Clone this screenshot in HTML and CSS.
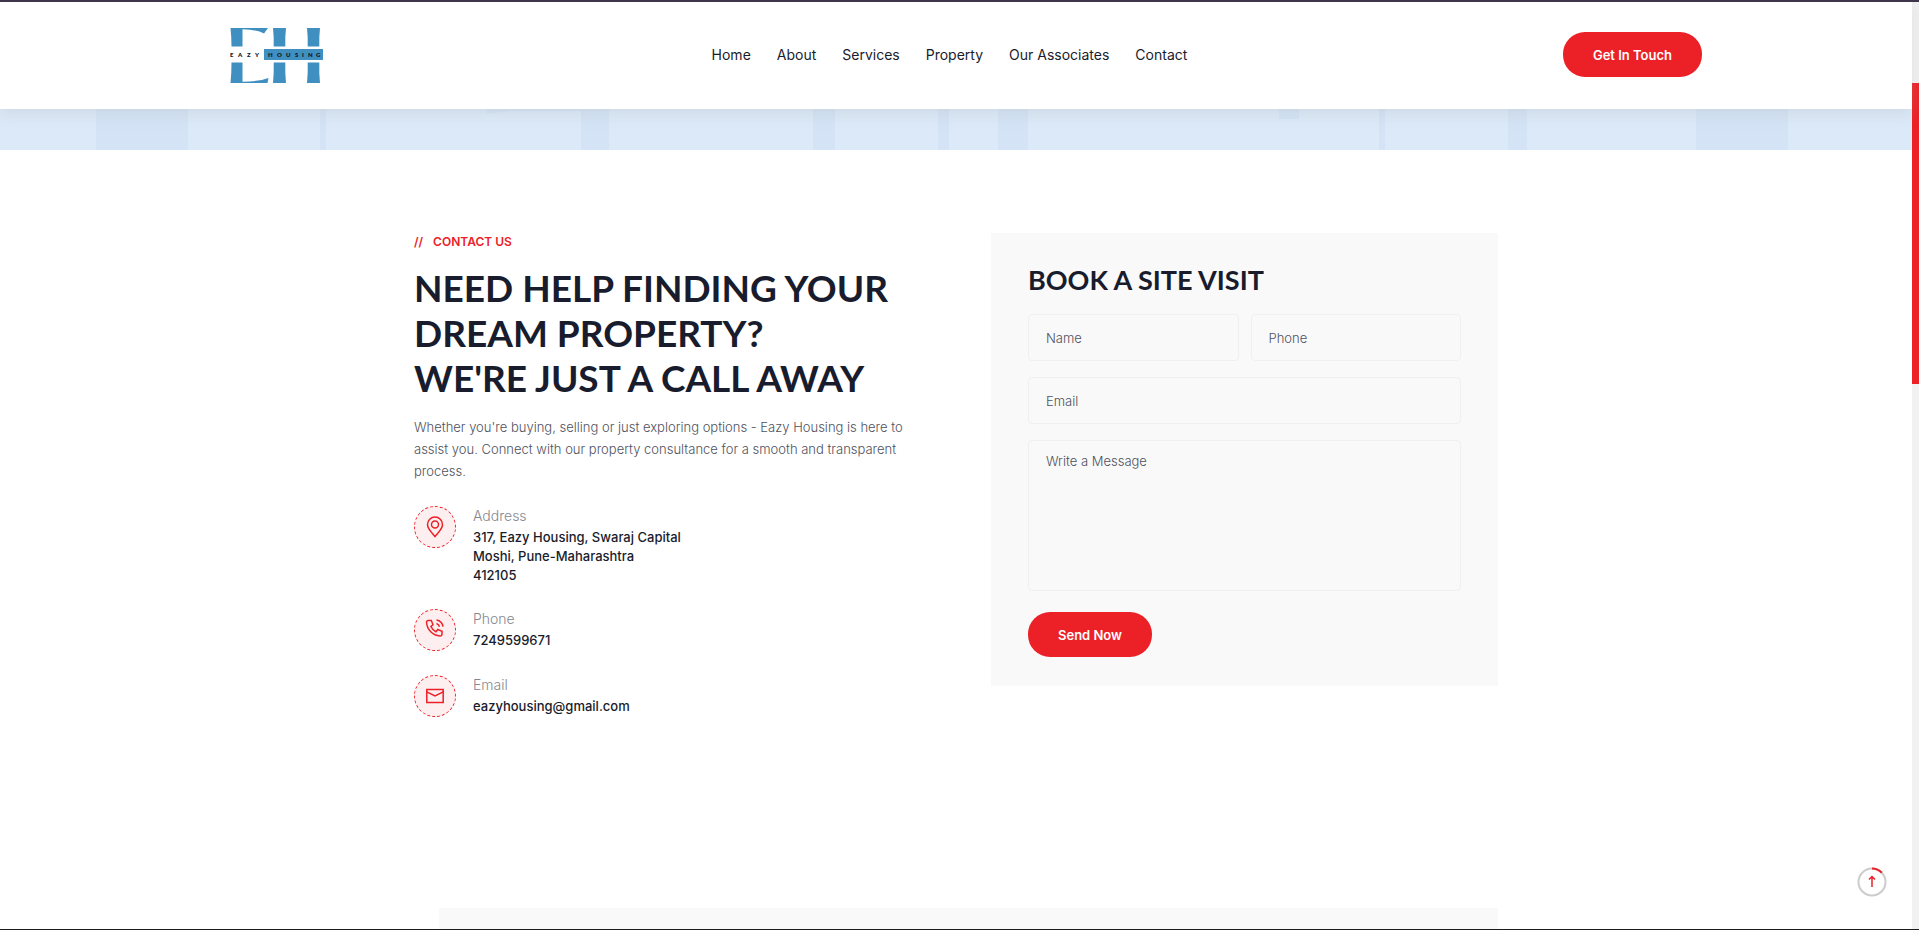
FILE: index.html
```html
<!DOCTYPE html>
<html lang="en">
<head>
    <meta charset="UTF-8">
    <meta name="viewport" content="width=device-width, initial-scale=1.0">
    <title>Eazy Housing - Contact</title>
    <link rel="stylesheet" href="styles.css">
</head>
<body>

    <div class="page">
        <!-- Header -->
        <header class="header">
            <div class="header-inner">
                <a class="logo" href="#" aria-label="Eazy Housing">
                    <svg width="94" height="58" viewBox="0 -1 94 58">
                        <g fill="#3f8fc0">
                            <path d="M0.500 1H38L34 6.500Q27 2.500 12.500 2.300V19.500H1.500Q1.500 10 0.500 1Z"/>
                            <path d="M0.500 56H37.500L38.500 51Q28 54.700 12.500 54.700V35.500H1.500Q1.500 46 0.500 56Z"/>
                            <path d="M43 1H56Q55 10 55.300 19.500H43.700Q44 10 43 1Z"/>
                            <path d="M43 56H56Q55 46 55.300 35.500H43.700Q44 46 43 56Z"/>
                            <path d="M77 1H90Q89 10 89.300 19.500H77.700Q78 10 77 1Z"/>
                            <path d="M77 56H90Q89 46 89.300 35.500H77.700Q78 46 77 56Z"/>
                            <rect x="34" y="22" width="59" height="11"/>
                        </g>
                        <g class="logo-text">
                            <text x="0 8 17 25" y="29.500">EAZY</text>
                            <text x="38 47 56 65 72 78 86" y="29.500">HOUSING</text>
                        </g>
                    </svg>
                </a>
                <nav class="nav">
                    <a href="#">Home</a>
                    <a href="#">About</a>
                    <a href="#">Services</a>
                    <a href="#">Property</a>
                    <a href="#">Our Associates</a>
                    <a href="#">Contact</a>
                </nav>
                <button class="button" type="button">Get In Touch</button>
            </div>
        </header>

        <!-- Bottom edge of the skyline banner -->
        <div class="banner">
            <svg class="skyline" viewBox="0 0 1912 41" preserveAspectRatio="none" aria-hidden="true">
                <g fill="#d4e3f6">
                    <rect x="96" width="92" height="41"/>
                    <rect x="320" width="6" height="41"/>
                    <rect x="581" width="28" height="41"/>
                    <path d="M487 0H581V2H510L487 5Z"/>
                    <rect x="813" width="22" height="41"/>
                    <rect x="938" width="11" height="41"/>
                    <rect x="998" width="30" height="41"/>
                    <rect x="1279" width="20" height="10"/>
                    <rect x="1379" width="6" height="41"/>
                    <rect x="1508" width="19" height="41"/>
                    <rect x="1696" width="92" height="41"/>
                </g>
            </svg>
        </div>

        <!-- Contact -->
        <main class="contact">
            <section class="contact-info">
                <p class="eyebrow"><span>//</span> Contact us</p>
                <h2>Need help finding your dream property?<br>We're just a call away</h2>
                <p class="intro">Whether you're buying, selling or just exploring options - Eazy Housing is here to assist you. Connect with our property consultance for a smooth and transparent process.</p>

                <ul class="contact-list">
                    <li>
                        <span class="contact-icon">
                            <svg width="20" height="22" viewBox="0 0 20 22">
                                <path d="M10 20.500C8 17.500 2.500 13.500 2.500 8.500A7.500 7.500 0 0 1 17.500 8.500C17.500 13.500 12 17.500 10 20.500Z"/>
                                <circle cx="10" cy="8.500" r="3.500"/>
                            </svg>
                        </span>
                        <div>
                            <span class="label">Address</span>
                            <address>317, Eazy Housing, Swaraj Capital<br>Moshi, Pune-Maharashtra<br>412105</address>
                        </div>
                    </li>
                    <li>
                        <span class="contact-icon">
                            <svg width="20" height="22" viewBox="0 2 20 22">
                                <path d="M3.200 3.500H6.300L8 7.700L5.900 9.500C7 12 8.500 13.500 11 14.700L12.800 12.500L17 14.200V17.300A1.700 1.700 0 0 1 15.200 18.900C7.800 18.500 2 12.700 1.500 5.200A1.700 1.700 0 0 1 3.200 3.500Z"/>
                                <path d="M11.500 6.500A4.500 4.500 0 0 1 14.500 9.700M11.500 3A8 8 0 0 1 18 9.700"/>
                            </svg>
                        </span>
                        <div>
                            <span class="label">Phone</span>
                            <a href="tel:7249599671">7249599671</a>
                        </div>
                    </li>
                    <li>
                        <span class="contact-icon">
                            <svg width="20" height="22" viewBox="0 0 20 22">
                                <path d="M1.800 4.500H18.200V17.500H1.800Z"/>
                                <path d="M1.800 6.800L10 11L18.200 6.800"/>
                            </svg>
                        </span>
                        <div>
                            <span class="label">Email</span>
                            <a href="mailto:eazyhousing@gmail.com">eazyhousing@gmail.com</a>
                        </div>
                    </li>
                </ul>
            </section>

            <form class="visit-form">
                <h3>Book a site visit</h3>
                <div class="fields">
                    <input type="text" name="name" placeholder="Name" aria-label="Name">
                    <input type="tel" name="phone" placeholder="Phone" aria-label="Phone">
                    <input class="wide" type="email" name="email" placeholder="Email" aria-label="Email">
                    <textarea class="wide" name="message" placeholder="Write a Message" aria-label="Write a Message"></textarea>
                </div>
                <button class="button" type="submit">Send Now</button>
            </form>
        </main>

        <div class="next-section"><div class="next-panel"></div></div>
    </div>

    <div class="scroll-track"><div class="scroll-thumb"></div></div>

    <button class="to-top" type="button" aria-label="Back to top">
        <svg width="30" height="30" viewBox="0 0 30 30">
            <circle class="ring" cx="15" cy="15" r="13.500"/>
            <path class="progress" d="M15 1.500A13.500 13.500 0 0 1 24.800 5.700"/>
            <path class="arrow" d="M15 20V9.500M12 12.500L15 9.500L18 12.500"/>
        </svg>
    </button>

</body>
</html>
```
FILE: styles.css
```css
* {
    box-sizing: border-box;
}
body {
    font-family: Inter, "Liberation Sans", sans-serif;
    background-color: #fff;
    color: #191c2c;
    font-size: 14px;
    margin: 0;
    display: flex;
    min-height: 100vh;
    border-top: 2px solid #3f364b;
    border-bottom: 1px solid #1c1c1f;
}
a {
    color: inherit;
    text-decoration: none;
}
h2,
h3 {
    font-family: Lato, "Liberation Sans", sans-serif;
    font-weight: 700;
    text-transform: uppercase;
}
.page {
    flex: 1;
    display: flex;
    flex-direction: column;
}

/* Header */
.header {
    position: relative;
    background-color: #fff;
    box-shadow: 0 4px 15px rgba(160, 170, 160, 0.25);
}
.header-inner {
    max-width: 1492px;
    height: 107px;
    margin: 0 auto;
    padding-bottom: 2px;
    display: flex;
    align-items: center;
    justify-content: space-between;
}
.logo {
    padding: 0 12px 0 20px;
}
.logo svg {
    display: block;
}
.logo-text {
    font-family: Lato, sans-serif;
    font-size: 6px;
    font-weight: 800;
    fill: #14202c;
}
.nav {
    display: flex;
    gap: 26px;
}
.button {
    height: 45px;
    padding: 0 30px;
    border: none;
    border-radius: 22px;
    background-color: #ec2127;
    color: #fff;
    font: inherit;
    font-size: 13px;
    font-weight: 600;
    cursor: pointer;
}

/* Banner */
.banner {
    background-color: #dce9f9;
}
.skyline {
    display: block;
    width: 100%;
    height: 41px;
}

/* Contact */
.contact {
    width: 100%;
    max-width: 1084px;
    margin: 0 auto;
    padding: 83px 0 191px;
    display: grid;
    grid-template-columns: 1fr 1fr;
    align-items: start;
    gap: 70px;
}
.eyebrow {
    display: flex;
    gap: 10px;
    margin: 0 0 14px;
    color: #ec2127;
    font-size: 12px;
    font-weight: 600;
    line-height: 18px;
    text-transform: uppercase;
}
h2 {
    margin: 0 0 16px;
    font-size: 37px;
    line-height: 45px;
}
.intro {
    margin: 0 0 24px;
    color: #4f515e;
    font-size: 13px;
    font-weight: 300;
    line-height: 22px;
}
.contact-list {
    list-style: none;
    margin: 0;
    padding: 0;
    display: flex;
    flex-direction: column;
    gap: 24px;
}
.contact-list li {
    display: flex;
    gap: 17px;
}
.contact-icon {
    width: 42px;
    height: 42px;
    display: flex;
    align-items: center;
    justify-content: center;
    border: 1px dashed #ec2127;
    border-radius: 50%;
    background-color: #fdeeef;
}
.contact-icon svg {
    fill: none;
    stroke: #ec2127;
    stroke-width: 1.5;
}
.label {
    display: block;
    margin-bottom: 3px;
    color: #85878f;
    font-weight: 300;
    line-height: 19px;
}
address,
.contact-list a {
    display: block;
    font-size: 13px;
    font-style: normal;
    font-weight: 500;
    line-height: 19px;
}

/* Form */
.visit-form {
    padding: 30px 37px 29px;
    background-color: #f9f9f9;
}
h3 {
    margin: 0 0 17px;
    font-size: 27px;
    line-height: 34px;
}
.fields {
    display: grid;
    grid-template-columns: 1fr 1fr;
    gap: 16px 12px;
    margin-bottom: 21px;
}
.wide {
    grid-column: 1 / -1;
}
input,
textarea {
    width: 100%;
    height: 47px;
    padding: 0 17px;
    border: 1px solid #f0f0f0;
    border-radius: 4px;
    background-color: transparent;
    font: inherit;
    font-size: 13px;
    font-weight: 300;
}
textarea {
    height: 151px;
    padding-top: 12px;
    resize: none;
}
::placeholder {
    color: #4f515e;
}

/* Next section */
.next-section {
    flex: 1;
    display: flex;
    width: 100%;
    max-width: 1084px;
    margin: 0 auto;
    padding-left: 25px;
}
.next-panel {
    flex: 1;
    background-color: #f9f9f9;
}

/* Scroll indicator */
.scroll-track {
    width: 7px;
    padding-top: 81px;
    background-color: #f1f1f1;
}
.scroll-thumb {
    height: 301px;
    background-color: #ec2127;
}

.to-top {
    position: fixed;
    right: 32px;
    bottom: 33px;
    padding: 0;
    border: none;
    background: none;
    cursor: pointer;
}
.to-top svg {
    display: block;
    fill: none;
    stroke-width: 2;
}
.ring {
    stroke: #ccc;
}
.progress,
.arrow {
    stroke: #ec2127;
}
.arrow {
    stroke-width: 1.5;
}
```
